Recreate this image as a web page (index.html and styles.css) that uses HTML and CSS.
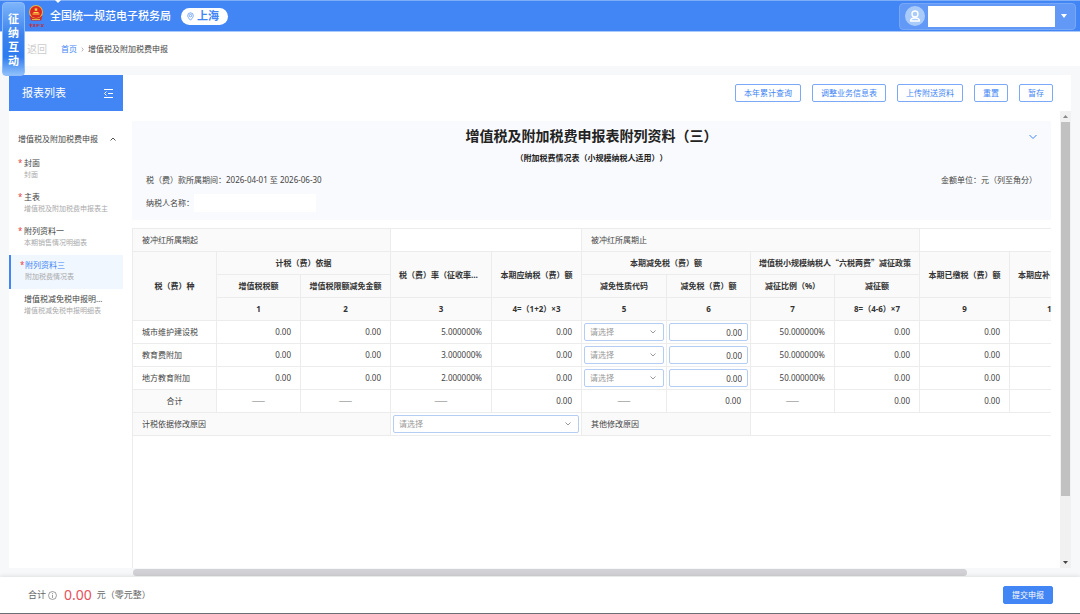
FILE: index.html
```
<!DOCTYPE html>
<html lang="zh-CN">
    <head>
        <meta charset="utf-8" />
        <meta name="viewport" content="width=device-width, initial-scale=1" />
        <title>增值税及附加税费申报</title>
        <link rel="stylesheet" href="styles.css">
    </head>

    <body>
        <a class="side-tab" href="#">征<br>纳<br>互<br>动</a>

        <header class="header">
            <svg class="emblem" viewBox="0 0 18 24" width="18" height="24">
                <circle cx="9" cy="8" r="7" fill="#e7b640" />
                <circle cx="9" cy="8" r="6" fill="#dc2a20" />
                <path d="M9 3.4l.6 1.3 1.4.1-1 1 .3 1.4L9 6.5l-1.300.7.3-1.400-1-1 1.400-.1z" fill="#ffd84a" />
                <path d="M5.500 10h7M6.500 8.500h5" stroke="#ffd84a" stroke-width="1" />
                <path d="M2.500 11.500Q9 17.500 15.500 11.500L14 16.500H4z" fill="#d9281f" />
                <path d="M5 15.500h8" stroke="#e7b640" stroke-width="1" />
                <path d="M2 21h3M3.500 19.500v4M6 20l2 3M8 20l-2 3M10 20v3M9.500 21h3M14 20l2 3M16.500 20l-2.500 3" stroke="#c2303d" stroke-width="1" fill="none" />
            </svg>
            <span class="site-name">全国统一规范电子税务局</span>
            <button class="region" type="button">
                <svg viewBox="0 0 8 10" width="7" height="9" fill="none" stroke="#4285f4" stroke-width=".8">
                    <path d="M4 9.200C2 7 .8 5.500.8 4a3.200 3.200 0 0 1 6.400 0C7.200 5.500 6 7 4 9.200z" />
                    <circle cx="4" cy="4" r="1.400" />
                </svg>
                上海
            </button>
            <div class="account">
                <svg class="avatar" viewBox="0 0 20 20" width="20" height="20">
                    <circle cx="10" cy="10" r="10" fill="#a9cbfa" />
                    <circle cx="10" cy="8" r="3" fill="none" stroke="#fff" stroke-width="1.400" />
                    <path d="M5.500 15c0-4 9-4 9 0z" fill="none" stroke="#fff" stroke-width="1.300" stroke-linejoin="round" />
                </svg>
                <input class="account-name" type="text" aria-label="用户" />
                <svg viewBox="0 0 6 4" width="6" height="4"><path d="M0 0h6L3 4z" fill="#fff" /></svg>
            </div>
        </header>

        <nav class="crumbs">
            <button class="back" type="button">返回</button>
            <a href="#">首页</a>
            <svg viewBox="0 0 4 6" width="3" height="5" fill="none" stroke="#999"><path d="M1 .5L3 3 1 5.500" /></svg>
            <span>增值税及附加税费申报</span>
        </nav>

        <div class="workspace">
            <aside class="sidebar">
                <div class="sidebar-head">
                    <span>报表列表</span>
                    <svg viewBox="0 0 9 9" width="9" height="9" fill="none" stroke="#fff"><path d="M0 .5h9M4 4.500h5M0 8.500h9M2.500 2.500L.5 4.500l2 2" /></svg>
                </div>
                <div class="group">
                    <span>增值税及附加税费申报</span>
                    <svg viewBox="0 0 6 4" width="6" height="4" fill="none" stroke="#555"><path d="M.5 3.500L3 1l2.500 2.500" /></svg>
                </div>
                <a class="item required" href="#">
                    <span class="item-title">封面</span>
                    <span class="item-desc">封面</span>
                </a>
                <a class="item required" href="#">
                    <span class="item-title">主表</span>
                    <span class="item-desc">增值税及附加税费申报表主表</span>
                </a>
                <a class="item required" href="#">
                    <span class="item-title">附列资料一</span>
                    <span class="item-desc">本期销售情况明细表</span>
                </a>
                <a class="item required active" href="#">
                    <span class="item-title">附列资料三</span>
                    <span class="item-desc">附加税费情况表</span>
                </a>
                <a class="item" href="#">
                    <span class="item-title">增值税减免税申报明细表</span>
                    <span class="item-desc">增值税减免税申报明细表</span>
                </a>
            </aside>

            <main class="main">
                <div class="toolbar">
                    <button class="btn" type="button">本年累计查询</button>
                    <button class="btn" type="button">调整业务信息表</button>
                    <button class="btn" type="button">上传附送资料</button>
                    <button class="btn" type="button">重置</button>
                    <button class="btn" type="button">暂存</button>
                </div>
                <div class="report">
                    <div class="report-body">
                        <section class="info">
                            <svg class="info-toggle" viewBox="0 0 8 6" width="8" height="6" fill="none" stroke="#4285f4"><path d="M.5 1L4 4.500 7.500 1" /></svg>
                            <h1>增值税及附加税费申报表附列资料（三）</h1>
                            <h2>（附加税费情况表（小规模纳税人适用））</h2>
                            <div class="info-row">
                                <span>税（费）款所属期间：2026-04-01 至 2026-06-30</span>
                                <span>金额单位：元（列至角分）</span>
                            </div>
                            <div class="info-row">
                                <label class="taxpayer">纳税人名称：<input type="text" /></label>
                            </div>
                        </section>

                        <div class="sheet">
                            <table>
                                <colgroup>
                                    <col class="w84"><col class="w84"><col class="w90"><col class="w101"><col class="w90">
                                    <col class="w85"><col class="w84"><col class="w84"><col class="w85"><col class="w90"><col class="w84">
                                </colgroup>
                                <thead>
                                    <tr>
                                        <td class="label" colspan="3">被冲红所属期起</td>
                                        <td colspan="2"></td>
                                        <td class="label" colspan="4">被冲红所属期止</td>
                                        <td colspan="2"></td>
                                    </tr>
                                    <tr>
                                        <th rowspan="3">税（费）种</th>
                                        <th colspan="2">计税（费）依据</th>
                                        <th rowspan="2">税（费）率（征收率）（％）</th>
                                        <th rowspan="2">本期应纳税（费）额</th>
                                        <th colspan="2">本期减免税（费）额</th>
                                        <th class="cjk" colspan="2">增值税小规模纳税人“六税两费”减征政策</th>
                                        <th rowspan="2">本期已缴税（费）额</th>
                                        <th rowspan="2">本期应补（退）税（费）额</th>
                                    </tr>
                                    <tr>
                                        <th>增值税税额</th>
                                        <th>增值税限额减免金额</th>
                                        <th>减免性质代码</th>
                                        <th>减免税（费）额</th>
                                        <th>减征比例（%）</th>
                                        <th>减征额</th>
                                    </tr>
                                    <tr>
                                        <th>1</th>
                                        <th>2</th>
                                        <th>3</th>
                                        <th>4=（1+2）×3</th>
                                        <th>5</th>
                                        <th>6</th>
                                        <th>7</th>
                                        <th>8=（4-6）×7</th>
                                        <th>9</th>
                                        <th>10</th>
                                    </tr>
                                </thead>
                                <tbody>
                                    <tr>
                                        <td class="name">城市维护建设税</td>
                                        <td>0.00</td>
                                        <td>0.00</td>
                                        <td>5.000000%</td>
                                        <td>0.00</td>
                                        <td class="field"><select aria-label="减免性质代码"><option>请选择</option></select></td>
                                        <td class="field"><input type="text" value="0.00" aria-label="减免税（费）额" /></td>
                                        <td>50.000000%</td>
                                        <td>0.00</td>
                                        <td>0.00</td>
                                        <td></td>
                                    </tr>
                                    <tr>
                                        <td class="name">教育费附加</td>
                                        <td>0.00</td>
                                        <td>0.00</td>
                                        <td>3.000000%</td>
                                        <td>0.00</td>
                                        <td class="field"><select aria-label="减免性质代码"><option>请选择</option></select></td>
                                        <td class="field"><input type="text" value="0.00" aria-label="减免税（费）额" /></td>
                                        <td>50.000000%</td>
                                        <td>0.00</td>
                                        <td>0.00</td>
                                        <td></td>
                                    </tr>
                                    <tr>
                                        <td class="name">地方教育附加</td>
                                        <td>0.00</td>
                                        <td>0.00</td>
                                        <td>2.000000%</td>
                                        <td>0.00</td>
                                        <td class="field"><select aria-label="减免性质代码"><option>请选择</option></select></td>
                                        <td class="field"><input type="text" value="0.00" aria-label="减免税（费）额" /></td>
                                        <td>50.000000%</td>
                                        <td>0.00</td>
                                        <td>0.00</td>
                                        <td></td>
                                    </tr>
                                    <tr>
                                        <td class="label total">合计</td>
                                        <td class="none">——</td>
                                        <td class="none">——</td>
                                        <td class="none">——</td>
                                        <td>0.00</td>
                                        <td class="none">——</td>
                                        <td>0.00</td>
                                        <td class="none">——</td>
                                        <td>0.00</td>
                                        <td>0.00</td>
                                        <td></td>
                                    </tr>
                                    <tr>
                                        <td class="label" colspan="3">计税依据修改原因</td>
                                        <td class="field" colspan="2"><select aria-label="计税依据修改原因"><option>请选择</option></select></td>
                                        <td class="label" colspan="2">其他修改原因</td>
                                        <td colspan="4"></td>
                                    </tr>
                                </tbody>
                            </table>
                        </div>
                    </div>
                    <div class="vbar">
                        <svg viewBox="0 0 5 3" width="5" height="3"><path d="M0 3h5L2.500 0z" fill="#888" /></svg>
                        <div class="vbar-track"><div class="vbar-thumb"></div></div>
                        <svg viewBox="0 0 5 3" width="5" height="3"><path d="M0 0h5L2.500 3z" fill="#444" /></svg>
                    </div>
                </div>
            </main>
        </div>

        <div class="hbar"><div class="hbar-thumb"></div></div>

        <footer class="footer">
            <span>合计</span>
            <svg viewBox="0 0 10 10" width="9" height="9" fill="none" stroke="#777" stroke-width=".8"><circle cx="5" cy="5" r="4.400" /><path d="M5 4.200v3.500M5 2.300v1" /></svg>
            <strong class="sum">0.00</strong>
            <span>元（零元整）</span>
            <button class="btn primary" type="button">提交申报</button>
        </footer>
    </body>
</html>
```
FILE: styles.css
```
* {
    box-sizing: border-box;
}
body {
    display: flex;
    flex-direction: column;
    height: 100vh;
    margin: 0;
    background: #f7f8fa;
    color: #444;
    font: 8px/12px "Noto Sans", "Noto Sans CJK SC", sans-serif;
    text-spacing-trim: space-all;
    overflow: hidden;
}
button,
input,
select {
    font: inherit;
    color: inherit;
}
a {
    color: #4285f4;
    text-decoration: none;
}
svg {
    flex: none;
}

/* header */
.header {
    display: flex;
    position: relative;
    align-items: center;
    height: 32px;
    flex: none;
    padding: 0 4px 0 27px;
    border-top: 1px solid #7eaef8;
    border-bottom: 1px solid #a9c8fb;
    background: #4285f4;
    color: #fff;
}
.header::before {
    content: "";
    position: absolute;
    top: -1px;
    left: 55px;
    border: 3px solid transparent;
    border-top-color: #fff;
}
.site-name {
    margin-left: 5px;
    font-size: 11px;
    font-weight: 500;
}
.region {
    display: flex;
    align-items: center;
    gap: 3px;
    height: 17px;
    margin-left: 10px;
    padding: 0 9px 0 6px;
    border: 0;
    border-radius: 9px;
    background: #fff;
    color: #4285f4;
    font-size: 11px;
    font-weight: bold;
}
.account {
    display: flex;
    align-items: center;
    height: 27px;
    margin-left: auto;
    padding: 0 8px 0 5px;
    border: 1px solid #77a8f8;
    border-radius: 4px;
    background: #6299f6;
}
.account-name {
    width: 127px;
    height: 21px;
    margin: 0 6px 0 3px;
    border: 0;
    background: #fff;
    color: #444;
}
.side-tab {
    position: absolute;
    z-index: 10;
    top: 2px;
    left: 2px;
    width: 23px;
    height: 74px;
    padding-top: 9px;
    border: 1px solid #8dbcf9;
    border-radius: 4px;
    background: linear-gradient(#7db4fa, #3b82ee 45%, #2f7cf0 75%, #8fc0fa);
    color: #fff;
    font-size: 11px;
    font-weight: bold;
    line-height: 14px;
    text-align: center;
}

/* breadcrumb */
.crumbs {
    display: flex;
    align-items: center;
    height: 34px;
    flex: none;
    padding-left: 27px;
    background: #fff;
}
.crumbs svg {
    margin: 0 4px;
}
.back {
    margin-right: 14px;
    padding: 0;
    border: 0;
    background: none;
    color: #ccc;
    font-size: 10px;
}

/* workspace */
.workspace {
    display: flex;
    flex: 1;
    min-height: 0;
    margin: 9px 9px 0;
    background: #fff;
}
.sidebar {
    width: 114px;
    flex: none;
}
.sidebar-head {
    display: flex;
    align-items: center;
    justify-content: space-between;
    height: 36px;
    padding: 0 10px 0 13px;
    background: #4285f4;
    color: #fff;
    font-size: 11px;
}
.group {
    display: flex;
    align-items: center;
    justify-content: space-between;
    padding: 22px 7px 8px 9px;
}
.item {
    display: block;
    position: relative;
    height: 34px;
    padding: 4px 15px 0;
    color: #444;
}
.item-title,
.item-desc {
    display: block;
    overflow: hidden;
    white-space: nowrap;
}
.item-title {
    max-width: 80px;
    text-overflow: ellipsis;
}
.item-desc {
    color: #aaa;
    font-size: 7px;
}
.required::before {
    content: "*";
    position: absolute;
    left: 9px;
    color: #e54545;
}
.active {
    padding-left: 14px;
    border-left: 2px solid #4285f4;
    background: #f0f7ff;
}
.active .item-title {
    color: #4285f4;
}

.main {
    display: flex;
    flex: 1;
    flex-direction: column;
    min-width: 0;
}
.toolbar {
    display: flex;
    align-items: center;
    justify-content: flex-end;
    gap: 11px;
    height: 36px;
    padding-right: 18px;
}
.btn {
    height: 18px;
    padding: 0 8px;
    border: 1px solid #7ba9f7;
    border-radius: 2px;
    background: #fff;
    color: #4285f4;
    line-height: 14px;
}
.report {
    display: flex;
    flex: 1;
    min-height: 0;
}
.report-body {
    display: flex;
    flex: 1;
    flex-direction: column;
    min-width: 0;
    padding: 10px 9px 0;
}
.info {
    position: relative;
    padding: 5px 14px 8px;
    background: #f9fafd;
}
.info h1 {
    margin: 0;
    color: #222;
    font-size: 14px;
    line-height: 20px;
    text-align: center;
}
.info h2 {
    margin: 5px 0 6px;
    color: #222;
    font-size: 8px;
    line-height: 14px;
    text-align: center;
}
.info-toggle {
    position: absolute;
    top: 13px;
    right: 14px;
}
.info-row {
    display: flex;
    align-items: center;
    justify-content: space-between;
    height: 18px;
}
.info-row + .info-row {
    margin-top: 5px;
}
.taxpayer {
    display: flex;
    align-items: center;
}
.taxpayer input {
    width: 122px;
    height: 18px;
    border: 0;
    background: #fff;
}

/* declaration table */
.sheet {
    flex: 1;
    margin-top: 8px;
    border-left: 1px solid #ececec;
    overflow: hidden;
}
table {
    width: 961px;
    border-top: 1px solid #ececec;
    border-spacing: 0;
    table-layout: fixed;
}
.w84 {
    width: 84px;
}
.w85 {
    width: 85px;
}
.w90 {
    width: 90px;
}
.w101 {
    width: 101px;
}
th,
td {
    height: 23px;
    padding: 0 9px;
    border-right: 1px solid #ececec;
    border-bottom: 1px solid #ececec;
    overflow: hidden;
    text-align: right;
    text-overflow: ellipsis;
    white-space: nowrap;
}
th {
    padding: 0 8px;
    background: #fafafa;
    color: #333;
    text-align: center;
}
.cjk,
.none {
    font-family: "Noto Sans CJK SC", sans-serif;
}
.label {
    background: #fafafa;
    text-align: left;
}
.name {
    text-align: left;
}
.total,
.none {
    text-align: center;
}
.none {
    color: #777;
}
.field {
    padding: 0 2px;
}
.field input,
.field select {
    display: block;
    width: 100%;
    height: 18px;
    padding: 0 5px;
    border: 1px solid #b5cdf3;
    border-radius: 2px;
    background: #fff;
}
.field input {
    text-align: right;
}
.field select {
    appearance: none;
    background: #fff url("data:image/svg+xml,%3Csvg xmlns='http://www.w3.org/2000/svg' width='6' height='4' fill='none' stroke='%23999'%3E%3Cpath d='M.5.5L3 3 5.500.5'/%3E%3C/svg%3E") no-repeat right 7px center;
    color: #999;
}

/* scrollbars */
.vbar {
    display: flex;
    flex-direction: column;
    align-items: center;
    width: 11px;
    padding: 4px 0;
    background: #f1f1f1;
}
.vbar-track {
    flex: 1;
    align-self: stretch;
    margin: 4px 1px;
}
.vbar-thumb {
    height: 86%;
    background: #c1c1c1;
}
.hbar {
    flex: none;
    margin: 1px 31px 1px 133px;
}
.hbar-thumb {
    width: 91%;
    height: 7px;
    border-radius: 4px;
    background: #d2d2d6;
}

/* footer */
.footer {
    display: flex;
    align-items: center;
    height: 37px;
    flex: none;
    padding: 0 27px 0 28px;
    border-bottom: 1px solid #6b7078;
    background: #fff;
    box-shadow: 0 -1px 4px rgba(0, 0, 0, 0.1);
    color: #666;
    font-size: 9px;
}
.footer svg {
    margin: 0 7px 0 2px;
}
.sum {
    margin-right: 5px;
    color: #e8505b;
    font-size: 14px;
    font-weight: normal;
}
.primary {
    margin-left: auto;
    border-color: #4285f4;
    background: #4285f4;
    color: #fff;
    font-size: 8px;
}
```
